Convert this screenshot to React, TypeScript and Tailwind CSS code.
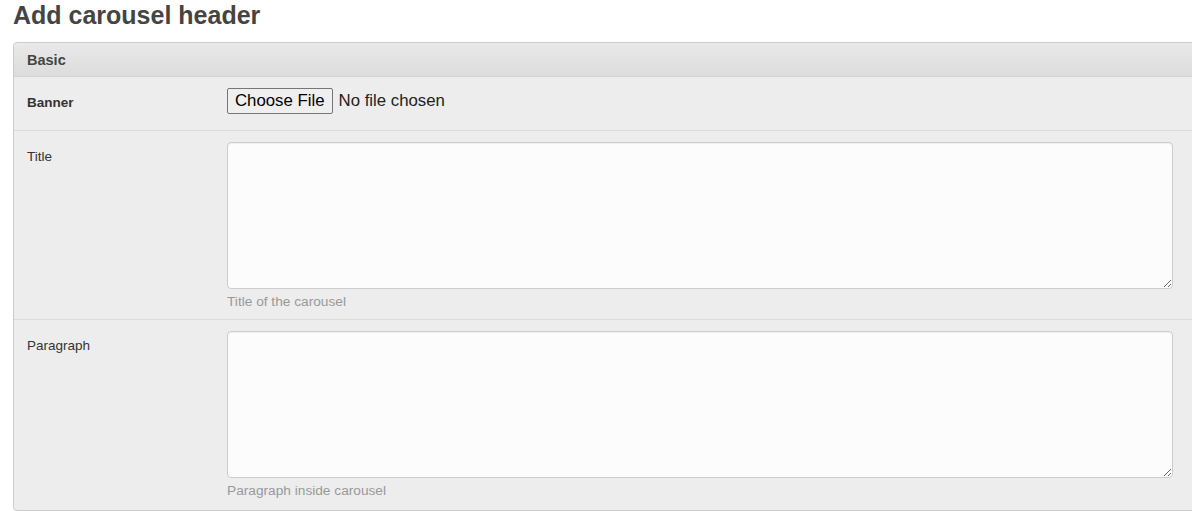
import React from 'react';

function Field({
  label,
  bold,
  help,
  children,
  last,
}: {
  label: string;
  bold?: boolean;
  help?: string;
  children: React.ReactNode;
  last?: boolean;
}) {
  const pb = !help ? 'pb-[16px]' : last ? 'pb-[10px]' : 'pb-[8px]';
  return (
    <div className={`flex px-[13px] pt-[11px] ${last ? '' : 'border-b border-[#dcdcdc]'} ${pb}`}>
      <div className={`w-[200px] shrink-0 pt-[6px] text-[13.5px] leading-[18px] text-[#333] ${bold ? 'font-bold' : ''}`}>
        {label}
      </div>
      <div className="flex-1">
        {children}
        {help && <p className="mt-[4px] text-[13.7px] leading-[18px] text-[#999]">{help}</p>}
      </div>
    </div>
  );
}

function Area() {
  return (
    <textarea className="block h-[147px] w-[946px] resize-y rounded-[4px] border border-[#ccc] bg-[#fcfcfc] shadow-[inset_0_1px_1px_rgba(0,0,0,0.05)] outline-none" />
  );
}

export default function App() {
  return (
    <div className="w-[1192px] overflow-hidden bg-white font-['Liberation_Sans',Arial,sans-serif] text-[#333]">
      <h1 className="px-[13px] pt-[1px] text-[25px] font-bold leading-[28px] text-[#444]">Add carousel header</h1>
      <div className="ml-[13px] mr-[-20px] mt-[13px] rounded-[4px] border border-[#ccc] bg-[#ededed]">
        <div className="h-[34px] rounded-t-[4px] border-b border-[#d4d4d4] bg-gradient-to-b from-[#e9e9e9] to-[#dcdcdc] px-[13px] text-[14.5px] font-bold leading-[34px] text-[#444]">
          Basic
        </div>
        <Field label="Banner" bold>
          <div className="flex items-center gap-[6px] text-[16.8px] leading-[20px] text-[#222]">
            <button className="h-[26px] rounded-[2px] border border-[#767676] bg-[#efefef] px-[7px] text-black">
              Choose File
            </button>
            <span>No file chosen</span>
          </div>
        </Field>
        <Field label="Title" help="Title of the carousel">
          <Area />
        </Field>
        <Field label="Paragraph" help="Paragraph inside carousel" last>
          <Area />
        </Field>
      </div>
    </div>
  );
}
